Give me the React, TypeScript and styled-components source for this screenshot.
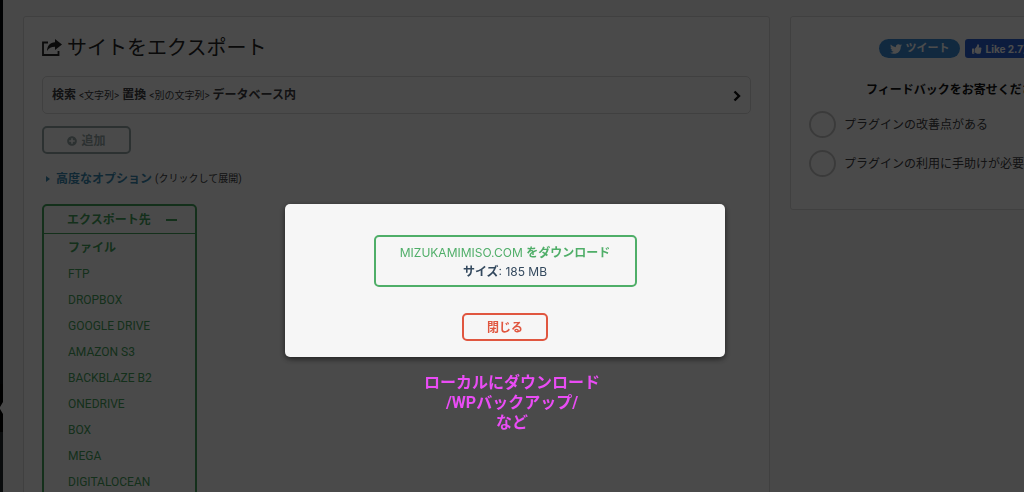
import React from "react";
import styled, { createGlobalStyle } from "styled-components";
import { FaPlusCircle, FaThumbsUp, FaTwitter } from "react-icons/fa";

const GlobalStyle = createGlobalStyle`
  *, *::before, *::after { box-sizing: border-box; }
  body {
    margin: 0;
    background: #f1f1f1;
    color: #3c3c40;
    font: 12px/20px Roboto, "Noto Sans CJK JP", sans-serif;
  }
  button, input { font: inherit; margin: 0; }
`;

const Page = styled.div`
  display: flex;
  height: 100vh;
  overflow: hidden;
`;

const AdminMenu = styled.nav`
  position: relative;
  flex: 0 0 3px;
  background: linear-gradient(#06080c 0 384px, #000 384px 432px, #23282d 432px);
`;

const MenuPointer = styled.svg`
  position: absolute;
  top: 402px;
  right: 0;
`;

const Content = styled.main`
  flex: 1;
  display: grid;
  grid-template-columns: minmax(0, 1fr) 234px;
  gap: 20px;
  padding: 16px 0 0 20px;
`;

const Card = styled.section`
  background: #f9f9f9;
  border: 1px solid #d6d6d6;
  border-radius: 3px;
  padding: 18px;
`;

const ExportCard = styled(Card)`
  min-height: 100vh;
`;

const FeedbackCard = styled(Card)`
  width: 332px;
  height: 194px;
  align-self: start;
  padding-top: 22px;
`;

const Title = styled.h1`
  display: flex;
  align-items: center;
  gap: 5px;
  margin: 0 0 16px;
  padding-top: 1px;
  color: #222;
  font-size: 20px;
  font-weight: 400;
  line-height: 24px;
`;

const ReplaceRow = styled.button`
  display: flex;
  align-items: center;
  justify-content: space-between;
  width: 100%;
  height: 38px;
  padding: 1px 9px 0;
  background: transparent;
  border: 1px solid #d6d6d6;
  border-radius: 5px;
  color: inherit;
`;

const Small = styled.small`
  font-size: 10px;
  font-weight: 400;
`;

const OutlineButton = styled.button<{ $color: string; $width: number }>`
  display: flex;
  align-items: center;
  justify-content: center;
  gap: 4px;
  width: ${(p) => p.$width}px;
  height: 28px;
  padding: 1px 0 0;
  background: transparent;
  border: 2px solid ${(p) => p.$color};
  border-radius: 5px;
  color: ${(p) => p.$color};
  font-weight: 700;
`;

const AddButton = styled(OutlineButton)`
  margin-top: 12px;
`;

const Advanced = styled.details`
  margin: 15px 0;
`;

const AdvancedSummary = styled.summary`
  display: flex;
  align-items: center;
  gap: 3px;
  padding-left: 4px;
  list-style: none;
`;

const AdvancedLabel = styled.strong`
  padding-left: 3px;
  color: #3a87ad;
`;

const Destinations = styled.div`
  width: 155px;
  border: 2px solid #45a05c;
  border-radius: 5px;
  color: #45a05c;
`;

const DestinationHead = styled.button`
  display: flex;
  align-items: center;
  gap: 15px;
  width: 100%;
  height: 28px;
  padding: 1px 0 0 23px;
  background: transparent;
  border: 0;
  border-bottom: 1px solid #45a05c;
  color: inherit;
  font-weight: 700;
  white-space: nowrap;
`;

const DestinationList = styled.ul`
  margin: 0;
  padding: 1px 0 0 24px;
  list-style: none;
`;

const DestinationItem = styled.li<{ $bold?: boolean }>`
  height: 26px;
  line-height: 26px;
  font-weight: ${(p) => (p.$bold ? 700 : 400)};
`;

const DestinationLink = styled.a`
  color: inherit;
  text-decoration: none;
`;

const Social = styled.div`
  display: flex;
  justify-content: center;
  gap: 5px;
`;

const SocialButton = styled.button<{ $color: string; $radius: number; $width: number }>`
  display: flex;
  align-items: center;
  justify-content: center;
  gap: 4px;
  width: ${(p) => p.$width}px;
  height: 19px;
  padding: 0;
  background: ${(p) => p.$color};
  border: 0;
  border-radius: ${(p) => p.$radius}px;
  color: #fff;
  font-size: 11px;
  font-weight: 700;
  white-space: nowrap;
`;

const LikeButton = styled(SocialButton)`
  justify-content: flex-start;
  padding-left: 7px;
  font-family: Inter, "Noto Sans CJK JP", sans-serif;
  font-size: 10px;
`;

const FeedbackTitle = styled.h2`
  margin: 22px 0 11px;
  color: #111;
  font-size: 12px;
  line-height: 20px;
  text-align: center;
`;

const Choice = styled.label`
  display: flex;
  align-items: center;
  gap: 8px;
  margin-bottom: 12px;
`;

const Radio = styled.input`
  appearance: none;
  width: 27px;
  height: 27px;
  border: 2px solid #c4c4c4;
  border-radius: 50%;
`;

const Overlay = styled.div`
  position: fixed;
  inset: 0;
  display: flex;
  flex-direction: column;
  align-items: center;
  padding-top: 204px;
  background: rgba(0, 0, 0, 0.7);
`;

const Dialog = styled.div`
  display: flex;
  flex-direction: column;
  align-items: center;
  gap: 26px;
  width: 440px;
  margin-right: 14px;
  padding: 31px 20px 16px;
  background: #f6f6f6;
  border-radius: 5px;
  box-shadow: 0 2px 6px rgba(0, 0, 0, 0.6);
`;

const Download = styled.a`
  width: 263px;
  padding: 6px 0 4px;
  border: 2px solid #4fae68;
  border-radius: 5px;
  color: #4fae68;
  font-family: Inter, "Noto Sans CJK JP", sans-serif;
  line-height: 19px;
  text-align: center;
  text-decoration: none;
`;

const Size = styled.span`
  display: block;
  color: #34495e;
`;

const Note = styled.p`
  margin: 16px 0 0;
  color: #ea4cf5;
  font-size: 16px;
  font-weight: 700;
  line-height: 20px;
  text-align: center;
`;

const destinations = [
  "ファイル",
  "FTP",
  "DROPBOX",
  "GOOGLE DRIVE",
  "AMAZON S3",
  "BACKBLAZE B2",
  "ONEDRIVE",
  "BOX",
  "MEGA",
  "DIGITALOCEAN",
];

const ExportIcon = () => (
  <svg width="20" height="18" viewBox="0 0 20 18" aria-hidden="true">
    <path d="M6 3.500H1v12.500h15.500v-4" fill="none" stroke="currentColor" strokeWidth="1.800" />
    <path d="M13 0 20 5.500 13 11V7.800C9 7.800 7 9 5 12 5.200 7 8 3.600 13 3.300Z" fill="currentColor" />
  </svg>
);

const Chevron = () => (
  <svg width="8" height="12" viewBox="0 0 8 12" aria-hidden="true">
    <path d="M1.500 1.500 6 6 1.500 10.500" fill="none" stroke="#111" strokeWidth="2.400" />
  </svg>
);

export default function App() {
  return (
    <>
      <GlobalStyle />
      <Page>
        <AdminMenu>
          <MenuPointer width="3" height="12" viewBox="0 0 3 12" aria-hidden="true">
            <path d="M3 0v12L0 7V5Z" fill="#f1f1f1" />
          </MenuPointer>
        </AdminMenu>
        <Content>
          <ExportCard>
            <Title>
              <ExportIcon />
              サイトをエクスポート
            </Title>
            <ReplaceRow type="button">
              <span>
                <strong>検索</strong> <Small>&lt;文字列&gt;</Small> <strong>置換</strong>{" "}
                <Small>&lt;別の文字列&gt;</Small> <strong>データベース内</strong>
              </span>
              <Chevron />
            </ReplaceRow>
            <AddButton type="button" $color="#95a5a6" $width={89}>
              <FaPlusCircle size={10} />
              追加
            </AddButton>
            <Advanced>
              <AdvancedSummary>
                <svg width="4" height="6" viewBox="0 0 4 6" aria-hidden="true">
                  <path d="M0 0 4 3 0 6Z" fill="#3a87ad" />
                </svg>
                <AdvancedLabel>高度なオプション</AdvancedLabel>
                <Small>(クリックして展開)</Small>
              </AdvancedSummary>
            </Advanced>
            <Destinations>
              <DestinationHead type="button">
                エクスポート先
                <svg width="11" height="2" viewBox="0 0 11 2" aria-hidden="true">
                  <path d="M0 1h11" stroke="currentColor" strokeWidth="2" />
                </svg>
              </DestinationHead>
              <DestinationList>
                {destinations.map((name, i) => (
                  <DestinationItem key={name} $bold={i === 0}>
                    <DestinationLink href="#">{name}</DestinationLink>
                  </DestinationItem>
                ))}
              </DestinationList>
            </Destinations>
          </ExportCard>
          <FeedbackCard>
            <Social>
              <SocialButton type="button" $color="#3a8ad4" $radius={10} $width={81}>
                <FaTwitter size={12} />
                ツイート
              </SocialButton>
              <LikeButton type="button" $color="#2a5fd0" $radius={3} $width={68}>
                <FaThumbsUp size={12} />
                Like 2.7万
              </LikeButton>
            </Social>
            <FeedbackTitle>フィードバックをお寄せください</FeedbackTitle>
            <Choice>
              <Radio type="radio" name="feedback" />
              プラグインの改善点がある
            </Choice>
            <Choice>
              <Radio type="radio" name="feedback" />
              プラグインの利用に手助けが必要
            </Choice>
          </FeedbackCard>
        </Content>
      </Page>
      <Overlay>
        <Dialog role="dialog" aria-modal="true">
          <Download href="#">
            MIZUKAMIMISO.COM <strong>をダウンロード</strong>
            <Size>
              <strong>サイズ</strong>: 185 MB
            </Size>
          </Download>
          <OutlineButton type="button" $color="#e0563f" $width={86}>
            閉じる
          </OutlineButton>
        </Dialog>
        <Note>
          ローカルにダウンロード
          <br />
          /WPバックアップ/
          <br />
          など
        </Note>
      </Overlay>
    </>
  );
}
